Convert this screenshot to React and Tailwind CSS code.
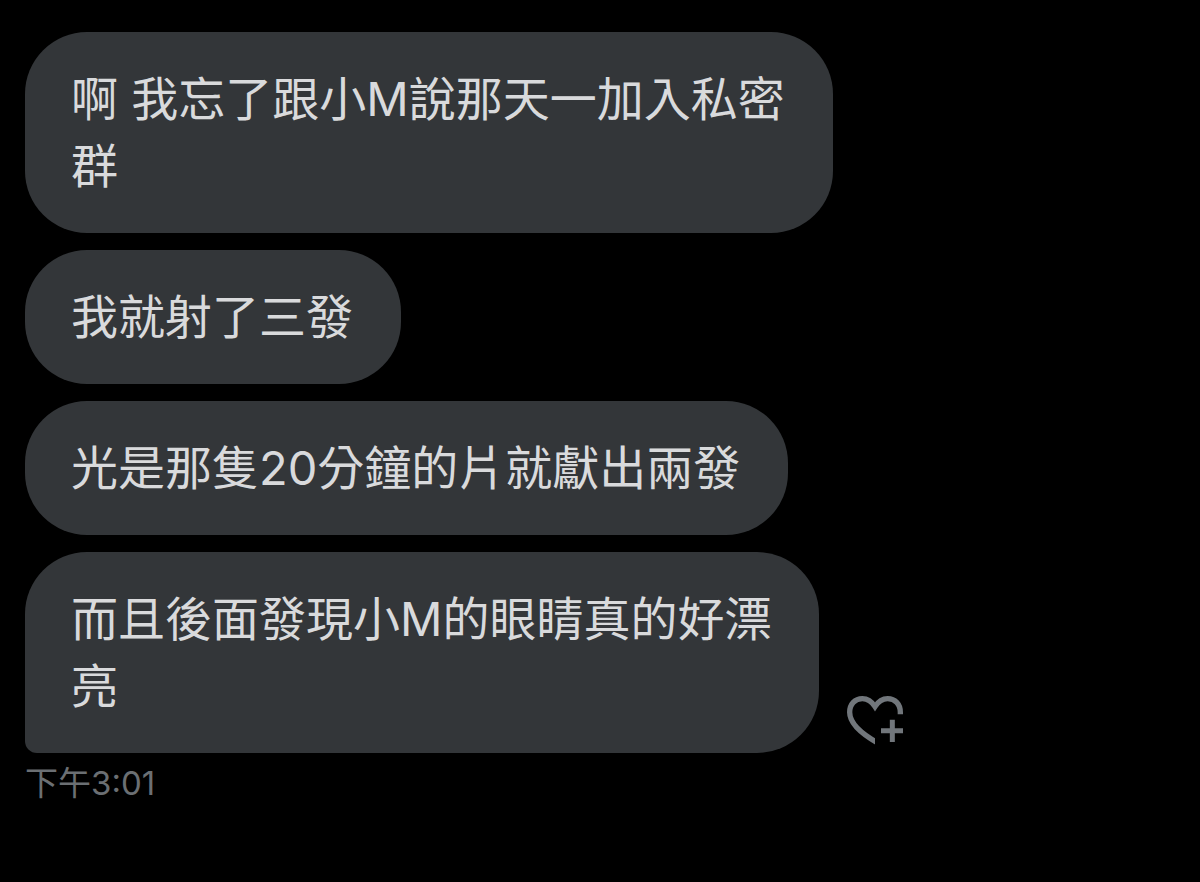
import React from "react";

const messages = [
  { id: 1, text: "啊 我忘了跟小M說那天一加入私密\n群" },
  { id: 2, text: "我就射了三發" },
  { id: 3, text: "光是那隻20分鐘的片就獻出兩發" },
  { id: 4, text: "而且後面發現小M的眼睛真的好漂\n亮" },
];

function HeartPlusIcon() {
  return (
    <svg viewBox="54 47 168 147" className="block w-14" aria-hidden="true">
      <clipPath id="heart-cut">
        <path d="M50 40H230V102H138V200H50Z" />
      </clipPath>
      <path
        d="M214 110V96C214 71 198 55 176 55C158 55 147 65 138 79C129 65 118 55 100 55C78 55 62 71 62 96C62 130 96 160 148 189"
        fill="none"
        stroke="currentColor"
        strokeWidth="16"
        clipPath="url(#heart-cut)"
      />
      <path
        d="M156 151H222M190 118V185"
        fill="none"
        stroke="currentColor"
        strokeWidth="15"
      />
    </svg>
  );
}

function Bubble({ text, last }) {
  return (
    <p
      className={`w-fit whitespace-pre-line bg-[#333639] pl-[46px] pr-12 pt-[33px] pb-[34px] text-[47px] leading-[67px] text-[#d9dadc] rounded-[62px] ${
        last ? "rounded-bl-[12px]" : ""
      }`}
    >
      {text}
    </p>
  );
}

function App() {
  return (
    <main
      lang="zh-Hant"
      className="min-h-screen bg-black px-[25px] pt-8 font-['Inter','Noto_Sans_CJK_TC',sans-serif]"
    >
      <ul className="flex flex-col gap-[17px]">
        {messages.map((message, index) => {
          const last = index === messages.length - 1;
          return (
            <li key={message.id} className="flex items-end gap-7">
              <Bubble text={message.text} last={last} />
              {last && (
                <button
                  type="button"
                  aria-label="新增回應"
                  className="mb-2 shrink-0 text-[#71767b]"
                >
                  <HeartPlusIcon />
                </button>
              )}
            </li>
          );
        })}
      </ul>
      <time className="mt-2 block text-[33px] leading-[44px] text-[#6b6f73]">
        下午3:01
      </time>
    </main>
  );
}

export default App;
